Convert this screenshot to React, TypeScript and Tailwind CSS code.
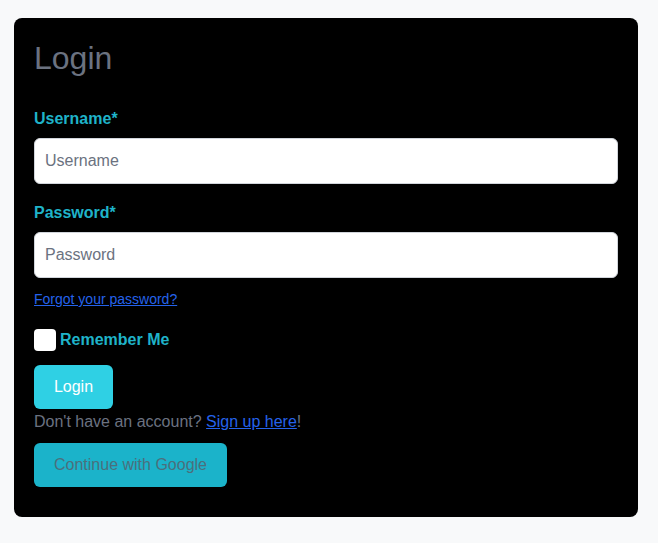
import { useState } from "react";

export default function App() {
    const [remember, setRemember] = useState(false);

    return (
        <div className="min-h-screen bg-[#f8f9fa] pt-[18px] pl-[14px] font-['Liberation_Sans',Arial,sans-serif]">
            <div className="w-[624px] rounded-lg bg-black px-5 pt-5 pb-[30px]">
                <h1 className="text-[32px] leading-[40px] text-[#6b7280]">Login</h1>

                <form className="mt-[31px] flex flex-col" onSubmit={(e) => e.preventDefault()}>
                    <label className="text-base font-bold leading-5 text-[#1fb3c9]">Username*</label>
                    <input
                        type="text"
                        placeholder="Username"
                        className="mt-[9px] h-[46px] w-full rounded-md border border-[#d1d5db] bg-white px-[10px] text-base text-[#111827] placeholder:text-[#6b7280] outline-none"
                    />

                    <label className="mt-[19px] text-base font-bold leading-5 text-[#1fb3c9]">Password*</label>
                    <input
                        type="password"
                        placeholder="Password"
                        className="mt-[9px] h-[46px] w-full rounded-md border border-[#d1d5db] bg-white px-[10px] text-base text-[#111827] placeholder:text-[#6b7280] outline-none"
                    />

                    <a href="#" className="mt-[13px] self-start text-[14px] leading-4 text-[#2563eb] underline">
                        Forgot your password?
                    </a>

                    <label className="mt-[22px] flex items-center gap-1 self-start">
                        <input
                            type="checkbox"
                            checked={remember}
                            onChange={(e) => setRemember(e.target.checked)}
                            className="h-[22px] w-[22px] appearance-none rounded bg-white"
                        />
                        <span className="text-base font-bold leading-5 text-[#1fb3c9]">Remember Me</span>
                    </label>

                    <button
                        type="submit"
                        className="mt-[14px] h-[44px] w-[79px] self-start rounded-md bg-[#2fd0e4] text-base text-white"
                    >
                        Login
                    </button>

                    <p className="mt-[1px] text-base leading-6 text-[#6b7280]">
                        Don't have an account?{" "}
                        <a href="#" className="text-[#2563eb] underline">
                            Sign up here
                        </a>
                        !
                    </p>

                    <button
                        type="button"
                        className="mt-[9px] h-[44px] w-[193px] self-start rounded-md bg-[#1bb3ca] text-base text-[#4b6f7c]"
                    >
                        Continue with Google
                    </button>
                </form>
            </div>
        </div>
    );
}
